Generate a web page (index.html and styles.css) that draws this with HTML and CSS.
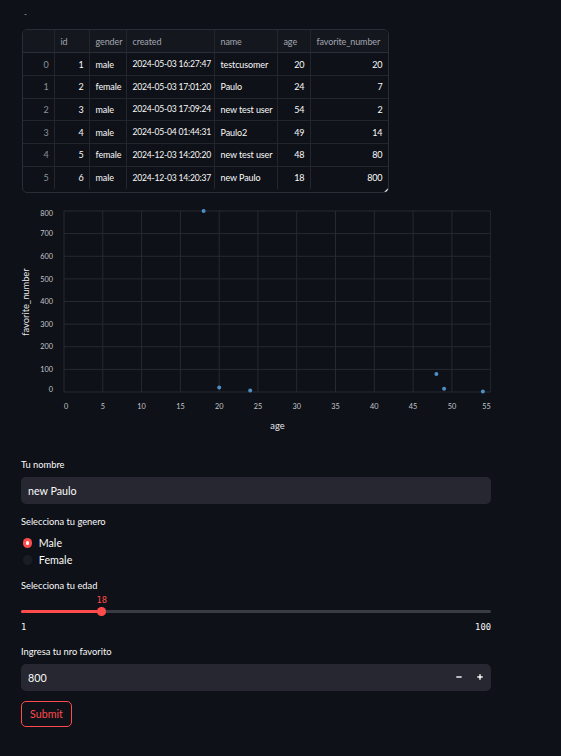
FILE: index.html
```html
<!DOCTYPE html>
<html lang="es">
<head>
<meta charset="utf-8">
<title>Streamlit app</title>
<link rel="stylesheet" href="styles.css">
</head>
<body>
<main class="main">
  <div class="topnote">-</div>

  <div class="table-wrap">
    <div class="dgrid">
      <div class="cell head"></div>
      <div class="cell head">id</div>
      <div class="cell head">gender</div>
      <div class="cell head">created</div>
      <div class="cell head">name</div>
      <div class="cell head">age</div>
      <div class="cell head last">favorite_number</div>

      <div class="cell idx">0</div><div class="cell num">1</div><div class="cell">male</div><div class="cell date">2024-05-03 16:27:47</div><div class="cell">testcusomer</div><div class="cell num">20</div><div class="cell num last">20</div>
      <div class="cell idx">1</div><div class="cell num">2</div><div class="cell">female</div><div class="cell date">2024-05-03 17:01:20</div><div class="cell">Paulo</div><div class="cell num">24</div><div class="cell num last">7</div>
      <div class="cell idx">2</div><div class="cell num">3</div><div class="cell">male</div><div class="cell date">2024-05-03 17:09:24</div><div class="cell">new test user</div><div class="cell num">54</div><div class="cell num last">2</div>
      <div class="cell idx">3</div><div class="cell num">4</div><div class="cell">male</div><div class="cell date">2024-05-04 01:44:31</div><div class="cell">Paulo2</div><div class="cell num">49</div><div class="cell num last">14</div>
      <div class="cell idx">4</div><div class="cell num">5</div><div class="cell">female</div><div class="cell date">2024-12-03 14:20:20</div><div class="cell">new test user</div><div class="cell num">48</div><div class="cell num last">80</div>
      <div class="cell idx lastrow">5</div><div class="cell num lastrow">6</div><div class="cell lastrow">male</div><div class="cell date lastrow">2024-12-03 14:20:37</div><div class="cell lastrow">new Paulo</div><div class="cell num lastrow">18</div><div class="cell num last lastrow">800</div>
    </div>
  </div>

  <svg class="chart" width="470" height="235" viewBox="0 0 470 235">
    <g class="grid">
      <line x1="43" y1="11" x2="469.7" y2="11"/>
      <line x1="43" y1="33.6" x2="469.7" y2="33.6"/>
      <line x1="43" y1="56.25" x2="469.7" y2="56.25"/>
      <line x1="43" y1="78.9" x2="469.7" y2="78.9"/>
      <line x1="43" y1="101.5" x2="469.7" y2="101.5"/>
      <line x1="43" y1="124.1" x2="469.7" y2="124.1"/>
      <line x1="43" y1="146.75" x2="469.7" y2="146.75"/>
      <line x1="43" y1="169.4" x2="469.7" y2="169.4"/>
      <line x1="43" y1="192" x2="469.7" y2="192"/>
      <line x1="43" y1="11" x2="43" y2="192"/>
      <line x1="81.8" y1="11" x2="81.8" y2="192"/>
      <line x1="120.6" y1="11" x2="120.6" y2="192"/>
      <line x1="159.4" y1="11" x2="159.4" y2="192"/>
      <line x1="198.2" y1="11" x2="198.2" y2="192"/>
      <line x1="236.9" y1="11" x2="236.9" y2="192"/>
      <line x1="275.7" y1="11" x2="275.7" y2="192"/>
      <line x1="314.5" y1="11" x2="314.5" y2="192"/>
      <line x1="353.3" y1="11" x2="353.3" y2="192"/>
      <line x1="392.1" y1="11" x2="392.1" y2="192"/>
      <line x1="430.9" y1="11" x2="430.9" y2="192"/>
      <line x1="469.7" y1="11" x2="469.7" y2="192"/>
    </g>
    <g class="ylab">
      <text x="32" y="16.4">800</text>
      <text x="32" y="36.2">700</text>
      <text x="32" y="58.9">600</text>
      <text x="32" y="81.5">500</text>
      <text x="32" y="104.1">400</text>
      <text x="32" y="126.7">300</text>
      <text x="32" y="149.4">200</text>
      <text x="32" y="172">100</text>
      <text x="32" y="191.6">0</text>
    </g>
    <g class="xlab">
      <text x="43" y="209.3" class="start">0</text>
      <text x="81.8" y="209.3">5</text>
      <text x="120.6" y="209.3">10</text>
      <text x="159.4" y="209.3">15</text>
      <text x="198.2" y="209.3">20</text>
      <text x="236.9" y="209.3">25</text>
      <text x="275.7" y="209.3">30</text>
      <text x="314.5" y="209.3">35</text>
      <text x="353.3" y="209.3">40</text>
      <text x="392.1" y="209.3">45</text>
      <text x="430.9" y="209.3">50</text>
      <text x="469.7" y="209.3" class="end">55</text>
    </g>
    <text class="axtitle" x="256.5" y="229">age</text>
    <text class="axtitle" transform="translate(7.8 102) rotate(-90)">favorite_number</text>
    <g class="pts">
      <circle cx="198.2" cy="187.5" r="2"/>
      <circle cx="229.2" cy="190.4" r="2"/>
      <circle cx="461.9" cy="191.5" r="2"/>
      <circle cx="423.1" cy="188.8" r="2"/>
      <circle cx="415.4" cy="173.9" r="2"/>
      <circle cx="182.6" cy="11" r="2"/>
    </g>
  </svg>

  <form class="form">
    <label class="field-label l1">Tu nombre</label>
    <div class="input">new Paulo</div>

    <div class="field-label l2">Selecciona tu genero</div>
    <div class="radios">
      <div class="radio"><span class="dot on"></span><span>Male</span></div>
      <div class="radio"><span class="dot"></span><span>Female</span></div>
    </div>

    <div class="field-label l3">Selecciona tu edad</div>
    <div class="slider">
      <div class="track">
        <div class="fill" style="width:17.17%"></div>
        <div class="thumb" style="left:17.17%"><span class="thumb-val">18</span></div>
      </div>
      <div class="range"><span>1</span><span>100</span></div>
    </div>

    <div class="field-label l4">Ingresa tu nro favorito</div>
    <div class="input number">
      <span>800</span>
      <div class="steps">
        <span class="step"><svg width="6" height="6" viewBox="0 0 6 6"><path d="M0.3 3H5.7"/></svg></span>
        <span class="step"><svg width="6" height="6" viewBox="0 0 6 6"><path d="M0.3 3H5.7M3 0.3V5.7"/></svg></span>
      </div>
    </div>

    <button type="button" class="submit">Submit</button>
  </form>
</main>
</body>
</html>
```

FILE: styles.css
```css
* { box-sizing: border-box; }

html, body {
  margin: 0;
  background: #0e1117;
}

body {
  color: #fafafa;
  font-family: Lato, "Open Sans", "Liberation Sans", sans-serif;
}

.main {
  width: 491px;
  padding-left: 21px;
}

.topnote {
  height: 29px;
  line-height: 29px;
  padding-left: 3px;
  font-size: 8px;
  color: #b0b3ba;
}

.table-wrap {
  position: relative;
  margin-left: 1px;
  width: 367px;
  border: 1px solid #2a2d35;
  border-radius: 5px;
  padding-bottom: 3px;
  overflow: hidden;
}

.table-wrap::after {
  content: "";
  position: absolute;
  right: 0;
  bottom: 0;
  width: 4px;
  height: 4px;
  background: #ffffff;
  clip-path: polygon(100% 0, 100% 100%, 0 100%);
}

.dgrid {
  display: grid;
  grid-template-columns: 32px 35px 37px 88px 63px 33px 77px;
}

.cell {
  min-width: 0;
  overflow: hidden;
  height: 22.67px;
  display: flex;
  align-items: center;
  padding: 0 5.5px;
  font-size: 9px;
  letter-spacing: -0.1px;
  white-space: nowrap;
  color: #fafafa;
  border-right: 1px solid #23262d;
  border-bottom: 1px solid #23262d;
}

.cell.date {
  font-size: 8.6px;
  letter-spacing: -0.22px;
}

.cell.head {
  height: 23.33px;
  color: #a2a6b0;
  background: #14171e;
  border-bottom-color: #2b2e36;
}

.cell.num, .cell.idx { justify-content: flex-end; }
.cell.idx { color: #8d919a; }
.cell.last { border-right: none; }
.cell.lastrow { border-bottom: none; }

.chart {
  display: block;
  margin-top: 7px;
  font-family: Lato, "Open Sans", "Liberation Sans", sans-serif;
}

.grid line {
  stroke: #272a31;
  stroke-width: 1;
}

.ylab text, .xlab text {
  font-size: 7.3px;
  fill: #c4c6cc;
}
.ylab text { text-anchor: end; }
.xlab text { text-anchor: middle; }
.xlab text.start { text-anchor: start; }
.xlab text.end { text-anchor: end; }

.axtitle {
  font-size: 9.3px;
  fill: #e6e7ea;
  text-anchor: middle;
}

.pts circle {
  fill: #4d8ec4;
}

.form {
  display: flex;
  flex-direction: column;
  width: 470px;
}

.field-label {
  display: block;
  height: 14px;
  line-height: 14px;
  font-size: 9.3px;
  color: #fafafa;
}
.l1 { margin-top: 23px; }
.l2 { margin-top: 11px; }
.l3 { margin-top: 10.5px; }
.l4 { margin-top: 11.5px; }

.input {
  margin-top: 5px;
  height: 26.7px;
  background: #262730;
  border-radius: 5px;
  padding-left: 7px;
  display: flex;
  align-items: center;
  font-size: 10.7px;
  color: #fafafa;
}

.input.number {
  justify-content: space-between;
  padding-right: 1px;
}

.steps { display: flex; }

.step {
  width: 21px;
  height: 26px;
  display: flex;
  align-items: center;
  justify-content: center;
}

.step svg path {
  stroke: #fafafa;
  stroke-width: 1.4;
  fill: none;
}

.radios {
  margin-top: 5.5px;
  display: flex;
  flex-direction: column;
}

.radio {
  height: 17px;
  display: flex;
  align-items: center;
  gap: 6.5px;
  padding-left: 2px;
  font-size: 10.7px;
}

.dot {
  width: 9.3px;
  height: 9.3px;
  border-radius: 50%;
  background: #1b1d24;
  display: flex;
  align-items: center;
  justify-content: center;
}

.dot.on { background: #ff4b4b; }
.dot.on::after {
  content: "";
  width: 3.4px;
  height: 3.4px;
  border-radius: 50%;
  background: #ffffff;
}

.slider {
  padding-top: 17px;
}

.track {
  position: relative;
  height: 2.7px;
  background: #3a3c44;
  border-radius: 2px;
}

.fill {
  height: 100%;
  background: #ff4b4b;
  border-radius: 2px;
}

.thumb {
  position: absolute;
  top: 50%;
  width: 8.6px;
  height: 8.6px;
  margin-left: -4.3px;
  margin-top: -4.3px;
  border-radius: 50%;
  background: #ff4b4b;
}

.thumb-val {
  position: absolute;
  left: 50%;
  bottom: 10.5px;
  transform: translateX(-50%);
  font-family: "DejaVu Sans Mono", "Liberation Mono", monospace;
  font-size: 8.8px;
  color: #ff4b4b;
}

.range {
  margin-top: 7px;
  height: 14px;
  display: flex;
  justify-content: space-between;
  align-items: center;
  font-family: "DejaVu Sans Mono", "Liberation Mono", monospace;
  font-size: 8.8px;
  color: #fafafa;
}

.submit {
  margin-top: 10px;
  align-self: flex-start;
  width: 51px;
  height: 26px;
  background: transparent;
  border: 1px solid #ff4b4b;
  border-radius: 5px;
  color: #ff4b4b;
  font-family: Lato, "Open Sans", "Liberation Sans", sans-serif;
  font-size: 10.7px;
  padding: 0;
}
```
